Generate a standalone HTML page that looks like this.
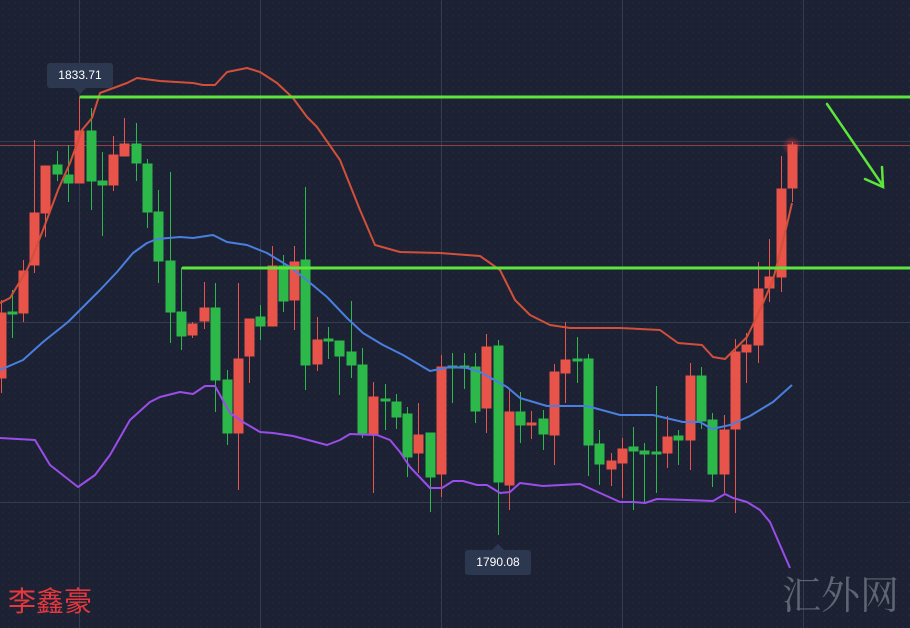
<!DOCTYPE html>
<html><head><meta charset="utf-8"><style>
html,body{margin:0;padding:0;background:#1c2234;}
body{width:910px;height:628px;overflow:hidden;position:relative;font-family:"Liberation Sans",sans-serif;}
svg{position:absolute;left:0;top:0;}
.lbl{position:absolute;background:#2c3850;color:#fff;font-size:12px;line-height:25px;text-align:center;border-radius:3px;}
</style></head><body>
<svg width="910" height="628" viewBox="0 0 910 628">
<defs>
<pattern id="dots" width="6" height="6" patternUnits="userSpaceOnUse"><circle cx="3" cy="3" r="0.8" fill="#232a3d"/></pattern>
<radialGradient id="glow"><stop offset="0" stop-color="#ff3b3b" stop-opacity="0.6"/><stop offset="1" stop-color="#ff3b3b" stop-opacity="0"/></radialGradient>
</defs>
<rect width="910" height="628" fill="#1c2234"/>
<rect width="910" height="628" fill="url(#dots)"/>
<g stroke="#343c50" stroke-width="1">
<line x1="79.5" y1="0" x2="79.5" y2="628"/><line x1="260.5" y1="0" x2="260.5" y2="628"/><line x1="441.5" y1="0" x2="441.5" y2="628"/><line x1="622.5" y1="0" x2="622.5" y2="628"/><line x1="803.5" y1="0" x2="803.5" y2="628"/>
<line x1="0" y1="141.5" x2="910" y2="141.5"/><line x1="0" y1="322.5" x2="910" y2="322.5"/><line x1="0" y1="502.5" x2="910" y2="502.5"/>
</g>
<line x1="0" y1="145.5" x2="910" y2="145.5" stroke="#b0484a" stroke-width="1" opacity="0.8"/>
<circle cx="792" cy="146" r="10" fill="url(#glow)"/>
<g stroke-width="1">
<g stroke="#e8534a" fill="#e8534a">
<line x1="1.5" y1="300" x2="1.5" y2="393"/><rect x="-3" y="313" width="9" height="65"/>
<line x1="23.5" y1="260" x2="23.5" y2="322"/><rect x="19" y="271" width="9" height="42"/>
<line x1="34.5" y1="140" x2="34.5" y2="273"/><rect x="30" y="213" width="9" height="52"/>
<line x1="45.5" y1="166" x2="45.5" y2="237"/><rect x="41" y="166" width="9" height="47"/>
<line x1="79.5" y1="97" x2="79.5" y2="183"/><rect x="75" y="131" width="9" height="52"/>
<line x1="113.5" y1="136" x2="113.5" y2="191"/><rect x="109" y="155" width="9" height="30"/>
<line x1="124.5" y1="118" x2="124.5" y2="156"/><rect x="120" y="144" width="9" height="12"/>
<line x1="192.5" y1="322" x2="192.5" y2="338"/><rect x="188" y="324" width="9" height="11"/>
<line x1="204.5" y1="282" x2="204.5" y2="329"/><rect x="200" y="308" width="9" height="13"/>
<line x1="238.5" y1="283" x2="238.5" y2="490"/><rect x="234" y="359" width="9" height="74"/>
<line x1="249.5" y1="319" x2="249.5" y2="383"/><rect x="245" y="319" width="9" height="37"/>
<line x1="272.5" y1="246" x2="272.5" y2="326"/><rect x="268" y="266" width="9" height="60"/>
<line x1="294.5" y1="246" x2="294.5" y2="330"/><rect x="290" y="262" width="9" height="38"/>
<line x1="317.5" y1="317" x2="317.5" y2="371"/><rect x="313" y="340" width="9" height="24"/>
<line x1="373.5" y1="382" x2="373.5" y2="493"/><rect x="369" y="397" width="9" height="37"/>
<line x1="418.5" y1="403" x2="418.5" y2="473"/><rect x="414" y="435" width="9" height="18"/>
<line x1="441.5" y1="355" x2="441.5" y2="497"/><rect x="437" y="367" width="9" height="107"/>
<line x1="486.5" y1="334" x2="486.5" y2="433"/><rect x="482" y="347" width="9" height="61"/>
<line x1="509.5" y1="390" x2="509.5" y2="510"/><rect x="505" y="412" width="9" height="73"/>
<line x1="531.5" y1="411" x2="531.5" y2="439"/><rect x="527" y="423" width="9" height="2"/>
<line x1="554.5" y1="364" x2="554.5" y2="465"/><rect x="550" y="372" width="9" height="63"/>
<line x1="565.5" y1="322" x2="565.5" y2="403"/><rect x="561" y="360" width="9" height="13"/>
<line x1="611.5" y1="453" x2="611.5" y2="486"/><rect x="607" y="461" width="9" height="8"/>
<line x1="622.5" y1="438" x2="622.5" y2="498"/><rect x="618" y="449" width="9" height="14"/>
<line x1="667.5" y1="416" x2="667.5" y2="468"/><rect x="663" y="437" width="9" height="16"/>
<line x1="690.5" y1="363" x2="690.5" y2="470"/><rect x="686" y="376" width="9" height="64"/>
<line x1="724.5" y1="415" x2="724.5" y2="493"/><rect x="720" y="430" width="9" height="44"/>
<line x1="735.5" y1="339" x2="735.5" y2="513"/><rect x="731" y="352" width="9" height="77"/>
<line x1="746.5" y1="333" x2="746.5" y2="383"/><rect x="742" y="345" width="9" height="7"/>
<line x1="758.5" y1="262" x2="758.5" y2="363"/><rect x="754" y="289" width="9" height="56"/>
<line x1="769.5" y1="239" x2="769.5" y2="302"/><rect x="765" y="277" width="9" height="11"/>
<line x1="781.5" y1="156" x2="781.5" y2="292"/><rect x="777" y="189" width="9" height="88"/>
<line x1="792.5" y1="142" x2="792.5" y2="202"/><rect x="788" y="145" width="9" height="43"/>
</g>
<g stroke="#2db84a" fill="#2db84a">
<line x1="12.5" y1="290" x2="12.5" y2="338"/><rect x="8" y="312" width="9" height="2"/>
<line x1="57.5" y1="151" x2="57.5" y2="181"/><rect x="53" y="165" width="9" height="9"/>
<line x1="68.5" y1="145" x2="68.5" y2="202"/><rect x="64" y="175" width="9" height="8"/>
<line x1="91.5" y1="108" x2="91.5" y2="210"/><rect x="87" y="131" width="9" height="50"/>
<line x1="102.5" y1="152" x2="102.5" y2="236"/><rect x="98" y="181" width="9" height="4"/>
<line x1="136.5" y1="123" x2="136.5" y2="181"/><rect x="132" y="144" width="9" height="19"/>
<line x1="147.5" y1="159" x2="147.5" y2="228"/><rect x="143" y="164" width="9" height="48"/>
<line x1="158.5" y1="190" x2="158.5" y2="283"/><rect x="154" y="212" width="9" height="49"/>
<line x1="170.5" y1="172" x2="170.5" y2="343"/><rect x="166" y="261" width="9" height="51"/>
<line x1="181.5" y1="268" x2="181.5" y2="350"/><rect x="177" y="312" width="9" height="24"/>
<line x1="215.5" y1="283" x2="215.5" y2="412"/><rect x="211" y="308" width="9" height="72"/>
<line x1="227.5" y1="370" x2="227.5" y2="445"/><rect x="223" y="380" width="9" height="53"/>
<line x1="260.5" y1="305" x2="260.5" y2="340"/><rect x="256" y="317" width="9" height="9"/>
<line x1="283.5" y1="255" x2="283.5" y2="312"/><rect x="279" y="266" width="9" height="35"/>
<line x1="305.5" y1="187" x2="305.5" y2="390"/><rect x="301" y="260" width="9" height="105"/>
<line x1="328.5" y1="327" x2="328.5" y2="359"/><rect x="324" y="339" width="9" height="2"/>
<line x1="339.5" y1="341" x2="339.5" y2="395"/><rect x="335" y="341" width="9" height="15"/>
<line x1="351.5" y1="301" x2="351.5" y2="378"/><rect x="347" y="352" width="9" height="13"/>
<line x1="362.5" y1="348" x2="362.5" y2="438"/><rect x="358" y="365" width="9" height="68"/>
<line x1="385.5" y1="384" x2="385.5" y2="430"/><rect x="381" y="399" width="9" height="2"/>
<line x1="396.5" y1="394" x2="396.5" y2="429"/><rect x="392" y="402" width="9" height="15"/>
<line x1="407.5" y1="407" x2="407.5" y2="477"/><rect x="403" y="414" width="9" height="43"/>
<line x1="430.5" y1="433" x2="430.5" y2="512"/><rect x="426" y="433" width="9" height="44"/>
<line x1="452.5" y1="353" x2="452.5" y2="403"/><rect x="448" y="366" width="9" height="2"/>
<line x1="464.5" y1="353" x2="464.5" y2="389"/><rect x="460" y="366" width="9" height="2"/>
<line x1="475.5" y1="353" x2="475.5" y2="423"/><rect x="471" y="367" width="9" height="44"/>
<line x1="498.5" y1="340" x2="498.5" y2="535"/><rect x="494" y="346" width="9" height="136"/>
<line x1="520.5" y1="392" x2="520.5" y2="443"/><rect x="516" y="412" width="9" height="13"/>
<line x1="543.5" y1="410" x2="543.5" y2="450"/><rect x="539" y="419" width="9" height="15"/>
<line x1="577.5" y1="337" x2="577.5" y2="383"/><rect x="573" y="359" width="9" height="2"/>
<line x1="588.5" y1="354" x2="588.5" y2="476"/><rect x="584" y="359" width="9" height="86"/>
<line x1="599.5" y1="430" x2="599.5" y2="485"/><rect x="595" y="444" width="9" height="20"/>
<line x1="633.5" y1="427" x2="633.5" y2="510"/><rect x="629" y="447" width="9" height="4"/>
<line x1="644.5" y1="443" x2="644.5" y2="502"/><rect x="640" y="451" width="9" height="3"/>
<line x1="656.5" y1="386" x2="656.5" y2="493"/><rect x="652" y="452" width="9" height="2"/>
<line x1="678.5" y1="430" x2="678.5" y2="465"/><rect x="674" y="436" width="9" height="4"/>
<line x1="701.5" y1="367" x2="701.5" y2="429"/><rect x="697" y="376" width="9" height="45"/>
<line x1="712.5" y1="413" x2="712.5" y2="487"/><rect x="708" y="420" width="9" height="54"/>
</g>
</g>
<g fill="none" stroke-width="2" stroke-linejoin="round">
<polyline stroke="#d2503a" points="0,303 10,298 28,268 43,230 58,190 70,163 82,130 92,118 100,93 127,83 137,78 160,81 193,83 203,85 215,85 227,72 247,68 260,72 277,83 293,98 307,117 317,127 340,160 360,210 375,245 400,252 440,253 480,256 500,270 515,300 530,315 550,325 570,328 620,328 660,330 678,343 702,345 713,357 725,359 747,337 760,310 773,280 785,233 792,203"/>
<polyline stroke="#4a7fe0" points="0,370 23,360 43,342 68,322 80,310 100,290 117,272 133,253 147,243 157,239 180,237 193,238 213,235 227,242 247,245 267,253 290,267 303,277 327,297 347,318 363,333 383,345 403,355 430,371 450,367 467,368 480,372 507,387 520,398 547,406 587,406 620,415 653,415 683,422 700,422 712,429 730,425 750,416 773,402 792,385"/>
<polyline stroke="#9a4de8" points="0,438 35,440 50,465 78,487 95,475 110,455 130,420 150,402 160,397 180,392 193,394 205,386 215,386 230,413 243,422 260,432 273,433 293,436 327,445 340,440 350,434 377,435 390,440 400,452 410,467 430,488 442,488 453,481 463,481 477,485 487,485 500,493 510,492 520,483 543,486 580,484 600,493 620,502 633,502 645,503 657,499 687,500 713,501 725,494 733,498 747,502 760,510 770,522 790,568"/>
</g>
<g stroke="#5ce63c" stroke-width="3" fill="none" stroke-linecap="round">
<line x1="81" y1="97" x2="910" y2="97"/>
<line x1="183" y1="268" x2="910" y2="268"/>
<line x1="827" y1="104" x2="883" y2="186" stroke-width="2.5"/>
<polyline points="882,167 883,187 865,179" stroke-width="2.5"/>
</g>
<polygon points="74,88 86,88 80,94" fill="#2c3850"/>
<polygon points="492,550 504,550 498,544" fill="#2c3850"/>
</svg>
<div class="lbl" style="left:47px;top:63px;width:66px;">1833.71</div>
<div class="lbl" style="left:465px;top:550px;width:66px;">1790.08</div>
<div style="position:absolute;left:8px;top:583px;font-size:28px;color:#e8383d;font-family:'Liberation Sans','Noto Sans CJK SC',sans-serif;line-height:38px;">李鑫豪</div>
<div style="position:absolute;left:782px;top:572px;font-size:39px;color:#5f6572;font-family:'Liberation Serif','Noto Serif CJK SC',serif;line-height:50px;">汇外网</div>
</body></html>
